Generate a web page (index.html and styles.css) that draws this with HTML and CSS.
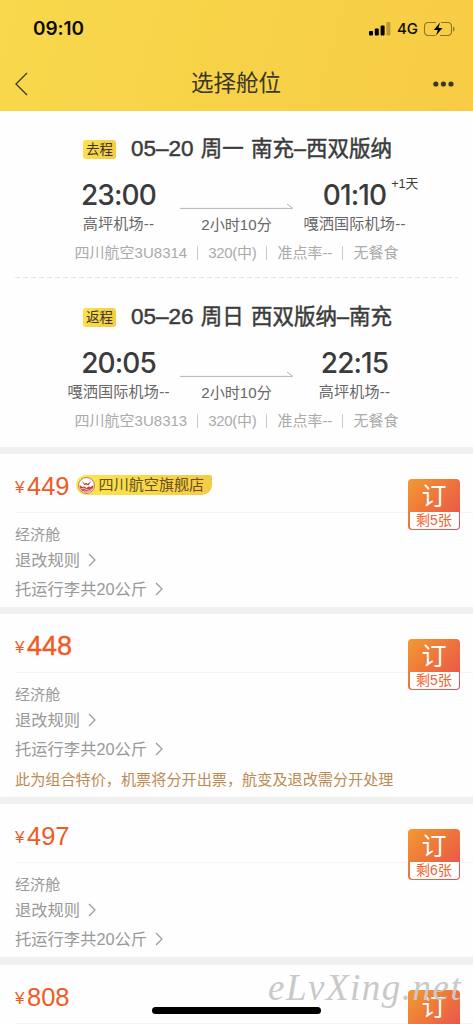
FILE: index.html
```html
<!DOCTYPE html>
<html lang="zh-CN">
<head>
<meta charset="utf-8">
<title>选择舱位</title>
<link rel="stylesheet" href="styles.css">
</head>
<body>
<svg class="defs" width="0" height="0" aria-hidden="true">
  <symbol id="chevron" viewBox="0 0 8 14"><path d="M1 1l6 6-6 6" fill="none" stroke="currentColor" stroke-width="1.2"/></symbol>
  <symbol id="arrow" viewBox="0 0 114 6"><path d="M0 5.4h112.5M107 1l6 4.4" fill="none" stroke="#b5b5b5" stroke-width="1"/></symbol>
</svg>
<header class="header">
  <div class="status">
    <span class="clock">09:10</span>
    <div class="signals">
      <svg width="22" height="14" viewBox="0 0 22 14"><rect x="0" y="9" width="4" height="4.6" rx="1"/><rect x="5.8" y="6.5" width="4" height="7.1" rx="1"/><rect x="11.6" y="3.5" width="4" height="10.1" rx="1"/><rect x="17.4" y="0" width="4" height="13.6" rx="1" opacity=".25"/></svg>
      <span class="network">4G</span>
      <svg width="32" height="16" viewBox="0 0 32 16"><path d="M13 1.5H5A3.5 3.5 0 0 0 1.5 5v6A3.5 3.5 0 0 0 5 14.5h7.5M18 1.5h7A3.5 3.5 0 0 1 28.500 5v6a3.500 3.500 0 0 1-3.500 3.500H17" fill="none" stroke="#8e7425" stroke-width="1.100"/><path d="M30 5.500v5q1.500-.8 1.500-2.500t-1.500-2.500z" fill="#8e7425"/><path d="M17 1.500L10.800 9h4l-1.800 5.500L19.500 7h-4z"/></svg>
    </div>
  </div>
  <nav class="nav">
    <svg class="back" width="13" height="24" viewBox="0 0 13 24"><path d="M12 1L1 12l11 11" fill="none" stroke="#3a3629" stroke-width="1.300"/></svg>
    <h1 class="title">选择舱位</h1>
    <svg class="more" width="21" height="6" viewBox="0 0 21 6"><circle cx="2.800" cy="3" r="2.600"/><circle cx="10.400" cy="3" r="2.600"/><circle cx="18" cy="3" r="2.600"/></svg>
  </nav>
</header>
<main>
  <section class="flight">
    <h2 class="route"><span class="tag">去程</span><span class="route-text"><span class="date">05–20</span> 周一 南充–西双版纳</span></h2>
    <div class="times">
      <div class="stop"><span class="time">23:00</span><span class="airport">高坪机场--</span></div>
      <div class="span"><svg width="114" height="6"><use href="#arrow"/></svg><span class="duration">2小时10分</span></div>
      <div class="stop"><span class="time">01:10<sup class="plus">+1天</sup></span><span class="airport">嘎洒国际机场--</span></div>
    </div>
    <p class="info"><span>四川航空3U8314</span><i></i><span class="plane">320(中)</span><i></i><span>准点率--</span><i></i><span>无餐食</span></p>
  </section>
  <section class="flight return">
    <h2 class="route"><span class="tag">返程</span><span class="route-text"><span class="date">05–26</span> 周日 西双版纳–南充</span></h2>
    <div class="times">
      <div class="stop"><span class="time">20:05</span><span class="airport">嘎洒国际机场--</span></div>
      <div class="span"><svg width="114" height="6"><use href="#arrow"/></svg><span class="duration">2小时10分</span></div>
      <div class="stop"><span class="time">22:15</span><span class="airport">高坪机场--</span></div>
    </div>
    <p class="info"><span>四川航空3U8313</span><i></i><span class="plane">320(中)</span><i></i><span>准点率--</span><i></i><span>无餐食</span></p>
  </section>

  <article class="fare">
    <div class="price-row"><span class="yen">¥</span><span class="price">449</span>
      <span class="store"><svg width="17" height="17" viewBox="0 0 17 17"><circle cx="8.500" cy="8.500" r="8" fill="#fff" stroke="#b55a45" stroke-width=".8"/><path d="M3.500 3.500l3.300 3.300 1.500-1 1.300 1.200 3.800-3.200-3 4.700-2-1-2 .5z" fill="#b8382c"/><path d="M1.500 8l3 2 2-.5 2 1.500 2-1.500 2 .5 3-2q0 4-3 6.200-4 2.500-8 0-3-2.200-3-6.200z" fill="#c9473a"/><path d="M3 12q2.500-1.500 5.500.5t5.500-.5M5 14.500q2-1 3.500 0t3.500 0" fill="none" stroke="#fff" stroke-width=".7"/></svg>四川航空旗舰店</span>
    </div>
    <div class="cabin">经济舱</div>
    <div class="rule">退改规则<svg width="8" height="14"><use href="#chevron"/></svg></div>
    <div class="rule bag">托运行李共20公斤<svg width="8" height="14"><use href="#chevron"/></svg></div>
    <button class="book"><b>订</b><span>剩5张</span></button>
  </article>
  <article class="fare">
    <div class="price-row"><span class="yen">¥</span><span class="price strong">448</span></div>
    <div class="cabin">经济舱</div>
    <div class="rule">退改规则<svg width="8" height="14"><use href="#chevron"/></svg></div>
    <div class="rule bag">托运行李共20公斤<svg width="8" height="14"><use href="#chevron"/></svg></div>
    <p class="notice">此为组合特价，机票将分开出票，航变及退改需分开处理</p>
    <button class="book"><b>订</b><span>剩5张</span></button>
  </article>
  <article class="fare">
    <div class="price-row"><span class="yen">¥</span><span class="price">497</span></div>
    <div class="cabin">经济舱</div>
    <div class="rule">退改规则<svg width="8" height="14"><use href="#chevron"/></svg></div>
    <div class="rule bag">托运行李共20公斤<svg width="8" height="14"><use href="#chevron"/></svg></div>
    <button class="book"><b>订</b><span>剩6张</span></button>
  </article>
  <article class="fare last">
    <div class="price-row"><span class="yen">¥</span><span class="price">808</span></div>
    <button class="book"><b>订</b></button>
  </article>
</main>
<div class="watermark">eLvXing.net</div>
<div class="home-bar"></div>
</body>
</html>
```

FILE: styles.css
```css
* { box-sizing: border-box; }
body {
  margin: 0;
  position: relative;
  width: 473px;
  height: 1024px;
  overflow: hidden;
  background: #fefefe;
  color: #3b3b3b;
  font-family: "Liberation Sans", "Noto Sans CJK SC", sans-serif;
}
h1, h2, p { margin: 0; font-weight: 400; }
.defs { position: absolute; }
svg { display: block; flex: none; }

.header { height: 111px; background: linear-gradient(105deg, #f8d84c, #f7d147 60%, #f8cc45); }
.status { height: 57px; padding: 0 18px 0 33px; display: flex; justify-content: space-between; align-items: center; }
.clock { font: 600 19px/24px Inter, sans-serif; color: #0d0b04; letter-spacing: -.1px; padding-top: 1px; }
.signals { display: flex; align-items: center; padding-top: 1px; }
.network { font: 500 15px/20px Inter, sans-serif; color: #0d0b04; margin: 0 5px 0 6px; }
.nav { height: 54px; padding: 0 19px 0 15px; display: grid; grid-template-columns: 1fr auto 1fr; align-items: center; }
.title { font-size: 22.500px; line-height: 32px; color: #3a3629; padding-left: 3px; }
.more { justify-self: end; fill: #3a3629; }

.flight { height: 168px; padding-top: 22px; position: relative; }
.flight:first-child { background: repeating-linear-gradient(90deg, #e6e6e6 0 5px, transparent 5px 8px) 15px 166px / 443px 1px no-repeat; }
.route { display: flex; align-items: center; height: 32px; padding-left: 83px; }
.tag { width: 33px; height: 19px; border-radius: 3px; background: linear-gradient(110deg, #fbe44d, #f5c844); font-size: 13.500px; line-height: 19px; text-align: center; color: #3b351e; }
.route-text { margin-left: 15px; font-size: 21.500px; line-height: 32px; white-space: pre; -webkit-text-stroke: .45px; word-spacing: 1.200px; }
.date { font-size: 22.500px; }
.times { display: grid; grid-template-columns: 118px 118px 118px; justify-content: center; height: 70px; padding-top: 12px; }
.stop, .span { display: flex; flex-direction: column; align-items: center; white-space: nowrap; }
.time { position: relative; font: 500 28px/36px Inter, sans-serif; letter-spacing: -.9px; }
.plus { position: absolute; left: 100%; top: -2px; margin-left: 5px; font: 12.800px/18px "Liberation Sans", "Noto Sans CJK SC", sans-serif; letter-spacing: -.2px; }
.airport, .duration { font-size: 15.100px; line-height: 20px; color: #666; }
.airport { letter-spacing: .2px; padding-top: 1px; }
.span { padding-top: 26px; }
.duration { margin-top: 6px; }
.info { display: flex; justify-content: center; align-items: center; gap: 10px; height: 20px; margin-top: 8px; font-size: 15px; line-height: 20px; color: #aaa; white-space: nowrap; }
.info i { width: 1px; height: 14px; background: #ccc; }
.plane { letter-spacing: -.3px; }

.fare { position: relative; border-top: 7px solid #f0f0f0; padding-bottom: 7px; color: #999; }
.fare.last { border-top-width: 8px; }
.price-row { display: flex; align-items: center; height: 59px; margin-left: 15px; padding-top: 6px; border-bottom: 1px solid #f4f4f4; color: #f15a24; }
.yen { font-size: 17px; width: 12px; line-height: 20px; padding-top: 3px; }
.price { font-size: 25.500px; line-height: 30px; }
.price.strong { font-size: 27px; -webkit-text-stroke: .4px; }
.store { display: flex; align-items: center; gap: 4px; height: 20px; width: 136px; margin-left: 6px; margin-top: -2px; padding-left: 2px; border-radius: 10px 2px 10px 10px; background: linear-gradient(90deg, #fbe750, #f5cb45); color: #68501d; font-size: 15.100px; line-height: 20px; white-space: nowrap; }
.cabin { margin: 12px 0 0 15px; font-size: 15.100px; line-height: 20px; }
.rule { display: flex; align-items: center; gap: 8px; margin: 4px 0 0 15px; font-size: 16.300px; line-height: 22px; }
.bag { margin-top: 7px; }
.notice { margin: 10px 0 0 15px; font-size: 15.150px; line-height: 20px; color: #bb8b52; }
.book { position: absolute; right: 13px; top: 25px; width: 52px; height: 51px; padding: 0 1.500px 1.500px; border: 0; border-radius: 4px; background: linear-gradient(135deg, #f29a31, #ed6e3e 55%, #e84a55); display: flex; flex-direction: column; font-family: inherit; }
.book b { height: 33px; font-weight: 400; font-size: 25px; line-height: 34px; text-align: center; color: #fff; }
.book span { flex: 1; border-radius: 0 0 3px 3px; background: #fff; color: #f0622f; font-size: 14px; line-height: 17px; text-align: center; }
.watermark { position: absolute; left: 268px; top: 966px; font: italic 37px/44px "Liberation Serif", serif; letter-spacing: 1.500px; color: #c9c9c9; }
.home-bar { position: absolute; left: 152px; top: 1007px; width: 169px; height: 7px; border-radius: 4px; background: #000; }
```
